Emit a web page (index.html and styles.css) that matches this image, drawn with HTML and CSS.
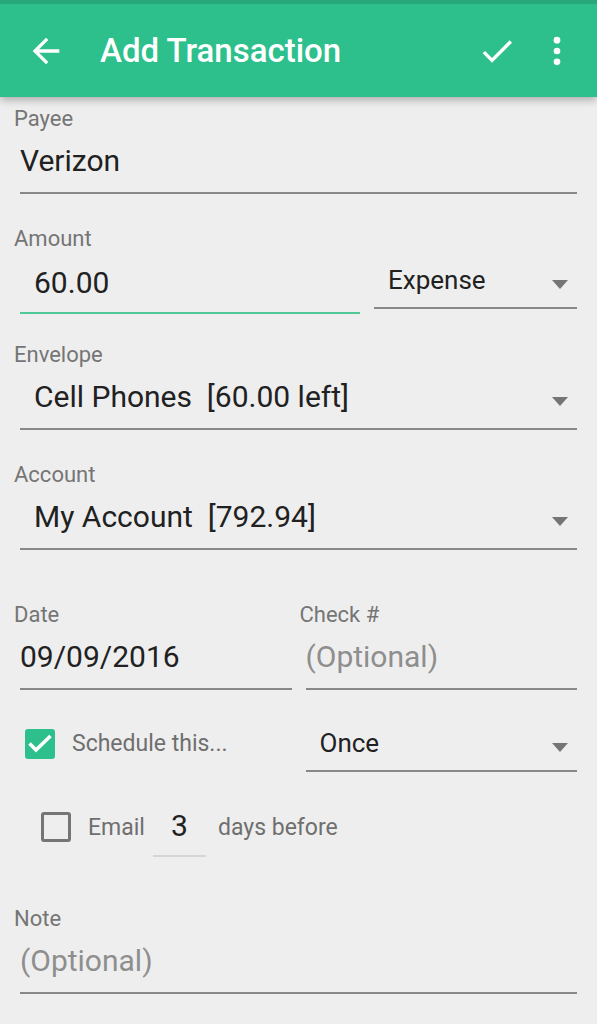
FILE: index.html
```html
<!DOCTYPE html>
<html lang="en">
<head>
    <meta charset="UTF-8">
    <meta name="viewport" content="width=device-width, initial-scale=1.0">
    <title>Add Transaction</title>
    <link rel="stylesheet" href="styles.css">
</head>
<body>
    <!-- Toolbar -->
    <header class="toolbar">
        <div class="toolbar-row">
            <span class="icon back">
                <svg viewBox="0 0 24 24" width="40" height="40"><path d="M20 11H7.83l5.59-5.59L12 4l-8 8 8 8 1.41-1.41L7.83 13H20v-2z" fill="#fff"/></svg>
            </span>
            <h1 class="title">Add Transaction</h1>
            <span class="icon save">
                <svg viewBox="0 0 24 24" width="40" height="40"><path d="M9 16.17L4.83 12l-1.42 1.41L9 19 21 7l-1.41-1.41z" fill="#fff"/></svg>
            </span>
            <span class="icon more">
                <svg viewBox="0 0 24 24" width="40" height="40"><circle cx="12" cy="5.5" r="2" fill="#fff"/><circle cx="12" cy="12" r="2" fill="#fff"/><circle cx="12" cy="18.5" r="2" fill="#fff"/></svg>
            </span>
        </div>
    </header>

    <!-- Transaction form -->
    <form class="form">
        <div class="field payee">
            <div class="field-label">Payee</div>
            <div class="field-input">Verizon</div>
        </div>

        <div class="field amount">
            <div class="field-label">Amount</div>
            <div class="amount-row">
                <div class="field-input amount-input">60.00</div>
                <div class="spinner small">
                    <span class="spinner-text">Expense</span>
                    <span class="caret"></span>
                </div>
            </div>
        </div>

        <div class="field envelope">
            <div class="field-label">Envelope</div>
            <div class="spinner">
                <span class="spinner-text">Cell Phones&nbsp; [60.00 left]</span>
                <span class="caret"></span>
            </div>
        </div>

        <div class="field account">
            <div class="field-label">Account</div>
            <div class="spinner">
                <span class="spinner-text">My Account&nbsp; [792.94]</span>
                <span class="caret"></span>
            </div>
        </div>

        <div class="split date-row">
            <div class="field">
                <div class="field-label">Date</div>
                <div class="field-input">09/09/2016</div>
            </div>
            <div class="field">
                <div class="field-label">Check #</div>
                <div class="field-input placeholder">(Optional)</div>
            </div>
        </div>

        <div class="split schedule-row">
            <div class="check-item">
                <span class="box checked">
                    <svg viewBox="0 0 30 30" width="30" height="30"><polyline points="4.5,14.5 11,21 25.5,7" fill="none" stroke="#fff" stroke-width="3.6"/></svg>
                </span>
                <span class="check-text">Schedule this...</span>
            </div>
            <div class="spinner small">
                <span class="spinner-text">Once</span>
                <span class="caret"></span>
            </div>
        </div>

        <div class="email-row">
            <span class="box"></span>
            <span class="check-text email-text">Email</span>
            <span class="days-input">3</span>
            <span class="check-text">days before</span>
        </div>

        <div class="field note">
            <div class="field-label">Note</div>
            <div class="field-input placeholder">(Optional)</div>
        </div>
    </form>
</body>
</html>
```

FILE: styles.css
```css
body {
    margin: 0;
    background-color: #eeeeee;
    font-family: Roboto, "Liberation Sans", sans-serif;
    color: #212121;
}

/* Toolbar */
.toolbar {
    background-color: #2dc08d;
    border-top: 4px solid #27a87b;
    box-shadow: 0 3px 8px rgba(0, 0, 0, 0.28);
    position: relative;
}

.toolbar-row {
    height: 93px;
    display: flex;
    align-items: center;
}

.icon {
    display: flex;
    width: 40px;
    height: 40px;
}

.icon.back {
    margin-left: 26px;
}

.title {
    flex: 1;
    margin: 0 0 0 34px;
    font-size: 33px;
    font-weight: 500;
    color: white;
    line-height: 40px;
}

.icon.save {
    margin-right: 20px;
}

.icon.more {
    margin-right: 20px;
}

/* Form */
.form {
    padding: 0 20px;
}

.field-label {
    margin-left: -6px;
    font-size: 22px;
    line-height: 26px;
    color: #757575;
}

.field-input {
    font-size: 30px;
    line-height: 36px;
    padding: 11px 0 13px;
    border-bottom: 2px solid #888888;
    white-space: nowrap;
}

.placeholder {
    color: #8e8e8e;
}

.payee {
    margin-top: 9px;
}

.amount {
    margin-top: 32px;
}

.amount-row {
    display: flex;
    align-items: flex-start;
    gap: 14px;
}

.amount-row .amount-input {
    width: 326px;
    padding: 13px 0 11px 14px;
    border-bottom-color: #4fc997;
}

.amount-row .spinner {
    flex: 1;
}

/* Spinners */
.spinner {
    display: flex;
    align-items: center;
    font-size: 30px;
    line-height: 36px;
    padding: 11px 0 13px 14px;
    border-bottom: 2px solid #888888;
}

.spinner.small {
    font-size: 26px;
    line-height: 32px;
    padding: 12px 0 11px 14px;
}

.spinner-text {
    flex: 1;
    white-space: nowrap;
}

.caret {
    width: 0;
    height: 0;
    border-left: 8px solid transparent;
    border-right: 8px solid transparent;
    border-top: 9px solid #757575;
    margin: 9px 9px 0 0;
}

.envelope {
    margin-top: 28px;
}

.account {
    margin-top: 32px;
}

.split {
    display: grid;
    grid-template-columns: 1fr 1fr;
    column-gap: 14px;
}

.date-row {
    margin-top: 52px;
}

/* Schedule */
.schedule-row {
    margin-top: 25px;
}

.check-item {
    display: flex;
    align-items: center;
}

.box {
    width: 30px;
    height: 30px;
    box-sizing: border-box;
    border: 3px solid #757575;
    border-radius: 3px;
    margin-right: 17px;
    display: flex;
    align-items: center;
    justify-content: center;
    flex-shrink: 0;
}

.check-item .box {
    margin-left: 5px;
}

.box.checked {
    background-color: #2dc08d;
    border: none;
}

.check-text {
    font-size: 23px;
    color: #6f6f6f;
    white-space: nowrap;
}

.email-row {
    display: flex;
    align-items: center;
    margin-top: 25px;
    padding-left: 21px;
}

.email-text {
    margin-right: 8px;
}

.days-input {
    width: 53px;
    text-align: center;
    font-size: 30px;
    line-height: 36px;
    padding: 11px 0;
    border-bottom: 2px solid #d6d6d6;
    margin-right: 12px;
}

.note {
    margin-top: 49px;
}
```
